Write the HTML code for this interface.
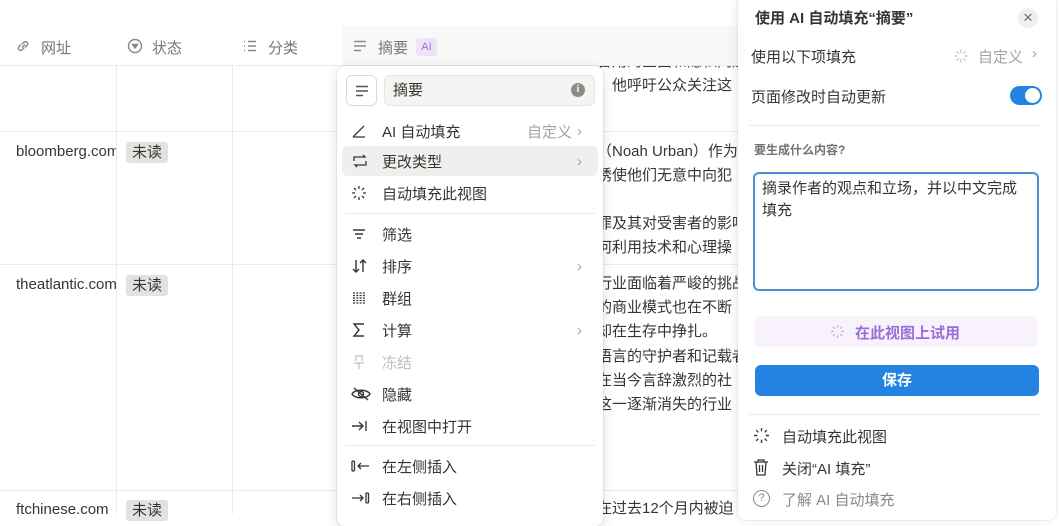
<!DOCTYPE html><html><head><meta charset="utf-8"><style>
*{box-sizing:border-box;margin:0;padding:0}
body{width:1059px;height:514px;overflow:hidden;background:#fff;font-family:"Liberation Sans","Noto Sans CJK SC",sans-serif;color:#37352f;position:relative;font-size:15px}
.a{position:absolute;white-space:nowrap}
.hl{position:absolute;height:1px;background:#ebebea}
.vl{position:absolute;width:1px;background:#ebebea}
.tag{position:absolute;background:#e3e2e0;border-radius:3px;padding:0 6px;font-size:15px;line-height:21px}
.hd{color:#787774;font-size:15px}
.mi{position:absolute;left:0;width:266px;height:30px;display:flex;align-items:center;font-size:15px}
.mi svg{position:absolute;left:14px}
.mi span{position:absolute;left:45px}
.sep{position:absolute;left:8px;width:250px;height:1px;background:#e9e9e7}
.body{font-size:15px;line-height:24px}
</style></head><body>
<div class="a body" style="left:597px;top:50px;width:143px;overflow:hidden">冒用的全面和隐私问题<br>，他呼吁公众关注这</div>
<div class="a body" style="left:597px;top:140px;width:143px;overflow:hidden">（Noah Urban）作为<br>诱使他们无意中向犯<br><br>罪及其对受害者的影响<br>何利用技术和心理操</div>
<div class="a body" style="left:597px;top:272px;width:143px;overflow:hidden;line-height:24.2px">行业面临着严峻的挑战<br>的商业模式也在不断<br>却在生存中挣扎。<br>语言的守护者和记载者<br>在当今言辞激烈的社<br>这一逐渐消失的行业</div>
<div class="a body" style="left:597px;top:497px;width:143px;overflow:hidden">在过去12个月内被迫</div>
<!-- header -->
<div class="a" style="left:0;top:0;width:740px;height:26px;background:#fff"></div>
<div class="a" style="left:0;top:26px;width:342px;height:39px;background:#fff"></div>
<div class="a" style="left:342px;top:26px;width:400px;height:39px;background:#f8f8f7"></div>
<div class="hl" style="left:0;top:65px;width:740px"></div>
<svg class="a" style="left:15px;top:38px" width="16" height="16" viewBox="0 0 16 16" fill="none" stroke="#8a8985" stroke-width="1.4"><path d="M7 9.5l3-3M6 6.5L4 8.5a2.2 2.2 0 003.2 3.2l2-2M10 9.5l2-2A2.2 2.2 0 008.8 4.3l-2 2"/></svg>
<div class="a hd" style="left:41px;top:37px">网址</div>
<svg class="a" style="left:127px;top:38px" width="16" height="16" viewBox="0 0 16 16" fill="none" stroke="#8a8985" stroke-width="1.4"><circle cx="8" cy="8" r="6.5"/><path d="M5.5 6.5h5L8 10z" fill="#8a8985"/></svg>
<div class="a hd" style="left:152px;top:37px">状态</div>
<svg class="a" style="left:242px;top:38px" width="16" height="16" viewBox="0 0 16 16" stroke="#8a8985" stroke-width="1.4"><path d="M2 3.5h1M2 8h1M2 12.5h1M6 3.5h8M6 8h8M6 12.5h8"/></svg>
<div class="a hd" style="left:268px;top:37px">分类</div>
<svg class="a" style="left:352px;top:38px" width="16" height="16" viewBox="0 0 16 16" stroke="#8a8985" stroke-width="1.4"><path d="M2 3.5h12M2 8h12M2 12.5h7"/></svg>
<div class="a hd" style="left:378px;top:37px">摘要</div>
<div class="a" style="left:416px;top:38px;width:21px;height:18px;background:#eee4f8;color:#9a6dd7;border-radius:3px;font-size:11px;text-align:center;line-height:18px">AI</div>
<!-- grid -->
<div class="vl" style="left:116px;top:66px;height:448px"></div>
<div class="vl" style="left:232px;top:66px;height:448px"></div>
<div class="hl" style="left:0;top:131px;width:740px"></div>
<div class="hl" style="left:0;top:264px;width:740px"></div>
<div class="hl" style="left:0;top:490px;width:740px"></div>
<div class="a" style="left:16px;top:143px;width:100px;overflow:hidden">bloomberg.com</div>
<div class="tag" style="left:126px;top:142px">未读</div>
<div class="a" style="left:16px;top:276px;width:100px;overflow:hidden">theatlantic.com</div>
<div class="tag" style="left:126px;top:275px">未读</div>
<div class="a" style="left:16px;top:501px;width:100px;overflow:hidden">ftchinese.com</div>
<div class="tag" style="left:126px;top:500px">未读</div>
<!-- menu -->
<div class="a" style="left:337px;top:66px;width:266px;height:460px;background:#fff;border-radius:8px;box-shadow:0 0 0 1px rgba(15,15,15,.06),0 4px 14px rgba(15,15,15,.12)">
 <div class="a" style="left:9px;top:9px;width:31px;height:31px;border:1px solid #dcdbd8;border-radius:6px"></div>
 <svg class="a" style="left:17px;top:17px" width="16" height="16" viewBox="0 0 16 16" stroke="#55534e" stroke-width="1.4"><path d="M2 3.5h12M2 8h12M2 12.5h7"/></svg>
 <div class="a" style="left:47px;top:9px;width:211px;height:31px;background:#f4f4f3;border:1px solid #e6e5e2;border-radius:6px;line-height:29px;padding-left:8px">摘要</div>
 <div class="a" style="left:234px;top:17px;width:14px;height:14px;border-radius:50%;background:#8c8b87;color:#fff;font-size:10px;text-align:center;line-height:14px;font-weight:bold">i</div>
 <div class="mi" style="top:50px"><svg width="16" height="16" viewBox="0 0 16 16" fill="none" stroke="#37352f" stroke-width="1.3"><path d="M2 14h12M2 14L13 3"/></svg><span>AI 自动填充</span><span style="left:190px;color:#a5a4a0">自定义</span><span style="left:240px;color:#a5a4a0">›</span></div>
 <div class="a" style="left:5px;top:80px;width:256px;height:30px;background:#efefee;border-radius:6px"></div>
 <div class="mi" style="top:80px"><svg width="18" height="18" viewBox="0 0 18 18" fill="none" stroke="#37352f" stroke-width="1.3"><path d="M3 9V5h11l-2-2M15 9v4H4l2 2"/></svg><span>更改类型</span><span style="left:240px;color:#a5a4a0">›</span></div>
 <div class="mi" style="top:112px"><svg width="16" height="16" viewBox="0 0 16 16" stroke="#37352f" stroke-width="1.3"><path d="M8 1v3M8 12v3M1 8h3M12 8h3M3 3l2 2M11 11l2 2M13 3l-2 2M3 13l2-2"/></svg><span>自动填充此视图</span></div>
 <div class="sep" style="top:147px"></div>
 <div class="mi" style="top:153px"><svg width="16" height="16" viewBox="0 0 16 16" stroke="#37352f" stroke-width="1.4"><path d="M2 4h12M4 8h8M6 12h4"/></svg><span>筛选</span></div>
 <div class="mi" style="top:185px"><svg width="18" height="16" viewBox="0 0 18 16" fill="none" stroke="#37352f" stroke-width="1.4"><path d="M5 2v12M2 11l3 3 3-3M12 14V2M9 5l3-3 3 3"/></svg><span>排序</span><span style="left:240px;color:#a5a4a0">›</span></div>
 <div class="mi" style="top:217px"><svg width="16" height="16" viewBox="0 0 16 16" fill="none" stroke="#37352f" stroke-width="1.2"><path d="M2 3h12M2 8h12M2 13h12M2 5.5h12M2 10.5h12" stroke-dasharray="2 1.3"/></svg><span>群组</span></div>
 <div class="mi" style="top:249px"><svg width="16" height="16" viewBox="0 0 16 16" fill="none" stroke="#37352f" stroke-width="1.4"><path d="M13 2H3l5 6-5 6h10"/></svg><span>计算</span><span style="left:240px;color:#a5a4a0">›</span></div>
 <div class="mi" style="top:281px;color:#c0bfbb"><svg width="16" height="16" viewBox="0 0 16 16" fill="none" stroke="#c0bfbb" stroke-width="1.3"><path d="M4 2h8M5 2v5M11 2v5M3 9h10M8 9v6"/></svg><span>冻结</span></div>
 <div class="mi" style="top:313px"><svg width="20" height="16" viewBox="0 0 20 16" fill="none" stroke="#37352f" stroke-width="1.4"><path d="M1 8c3-5 15-5 18 0c-3 5-15 5-18 0z"/><circle cx="10" cy="8" r="2.5"/><path d="M3 2l14 12"/></svg><span>隐藏</span></div>
 <div class="mi" style="top:345px"><svg width="18" height="16" viewBox="0 0 18 16" fill="none" stroke="#37352f" stroke-width="1.4"><path d="M1 8h11M8 4l4 4-4 4M15 3v10"/></svg><span>在视图中打开</span></div>
 <div class="sep" style="top:379px"></div>
 <div class="mi" style="top:385px"><svg width="20" height="16" viewBox="0 0 20 16" fill="none" stroke="#37352f" stroke-width="1.3"><rect x="1" y="3" width="2.5" height="10" rx="1"/><path d="M7 8h11M10 5l-3 3 3 3"/></svg><span>在左侧插入</span></div>
 <div class="mi" style="top:417px"><svg width="20" height="16" viewBox="0 0 20 16" fill="none" stroke="#37352f" stroke-width="1.3"><path d="M1 8h11M9 5l3 3-3 3"/><rect x="15" y="3" width="2.5" height="10" rx="1"/></svg><span>在右侧插入</span></div>
</div>
<!-- right panel -->
<div class="a" style="left:738px;top:0;width:318px;height:520px;background:#fff;box-shadow:-2px 0 10px rgba(0,0,0,.08),0 0 0 1px rgba(15,15,15,.05);border-radius:0 0 8px 8px">
 <div class="a" style="left:17px;top:7px;font-weight:bold;font-size:15px">使用 AI 自动填充“摘要”</div>
 <div class="a" style="left:280px;top:8px;width:20px;height:20px;border-radius:50%;background:#efefee;color:#73726e;text-align:center;line-height:20px;font-size:13px">✕</div>
 <div class="a" style="left:13px;top:46px">使用以下项填充</div>
 <svg class="a" style="left:216px;top:49px" width="14" height="14" viewBox="0 0 16 16" stroke="#b5b4b0" stroke-width="1.3"><path d="M8 1v3M8 12v3M1 8h3M12 8h3M3 3l2 2M11 11l2 2M13 3l-2 2M3 13l2-2"/></svg>
 <div class="a" style="left:240px;top:46px;color:#a5a4a0">自定义</div>
 <div class="a" style="left:294px;top:45px;color:#a5a4a0">›</div>
 <div class="a" style="left:13px;top:86px">页面修改时自动更新</div>
 <div class="a" style="left:272px;top:86px;width:32px;height:19px;border-radius:10px;background:#2383e2"></div>
 <div class="a" style="left:287px;top:88px;width:15px;height:15px;border-radius:50%;background:#fff"></div>
 <div class="a" style="left:11px;top:125px;width:292px;height:1px;background:#ebebea"></div>
 <div class="a" style="left:16px;top:141px;font-size:12px;color:#73726e;font-weight:bold">要生成什么内容?</div>
 <div class="a" style="left:15px;top:172px;width:286px;height:119px;border:2px solid #4a90d9;border-radius:6px;padding:4px 7px;font-size:15px;line-height:22px;white-space:normal">摘录作者的观点和立场，并以中文完成填充</div>
 <div class="a" style="left:16px;top:316px;width:284px;height:31px;background:#f7f2fc;border-radius:6px"></div>
 <svg class="a" style="left:92px;top:324px" width="15" height="15" viewBox="0 0 16 16" stroke="#c6a9e6" stroke-width="1.3"><path d="M8 1v3M8 12v3M1 8h3M12 8h3M3 3l2 2M11 11l2 2M13 3l-2 2M3 13l2-2"/></svg>
 <div class="a" style="left:117px;top:322px;color:#9a6dd7;font-weight:bold">在此视图上试用</div>
 <div class="a" style="left:17px;top:365px;width:284px;height:31px;background:#2383e2;border-radius:6px;color:#fff;text-align:center;line-height:31px;font-weight:bold">保存</div>
 <div class="a" style="left:11px;top:414px;width:292px;height:1px;background:#ebebea"></div>
 <svg class="a" style="left:15px;top:427px" width="17" height="17" viewBox="0 0 16 16" stroke="#37352f" stroke-width="1.3"><path d="M8 1v3M8 12v3M1 8h3M12 8h3M3 3l2 2M11 11l2 2M13 3l-2 2M3 13l2-2"/></svg>
 <div class="a" style="left:44px;top:426px">自动填充此视图</div>
 <svg class="a" style="left:15px;top:458px" width="16" height="18" viewBox="0 0 16 18" fill="none" stroke="#37352f" stroke-width="1.3"><path d="M1 4h14M5 4V2h6v2M3 4l1 13h8l1-13M6.5 7v7M9.5 7v7"/></svg>
 <div class="a" style="left:44px;top:458px">关闭“AI 填充”</div>
 <div class="a" style="left:15px;top:490px;width:17px;height:17px;border:1.3px solid #8a8985;border-radius:50%;font-size:11px;text-align:center;line-height:15px;color:#8a8985">?</div>
 <div class="a" style="left:44px;top:489px;color:#8a8985">了解 AI 自动填充</div>
</div>
</body></html>
